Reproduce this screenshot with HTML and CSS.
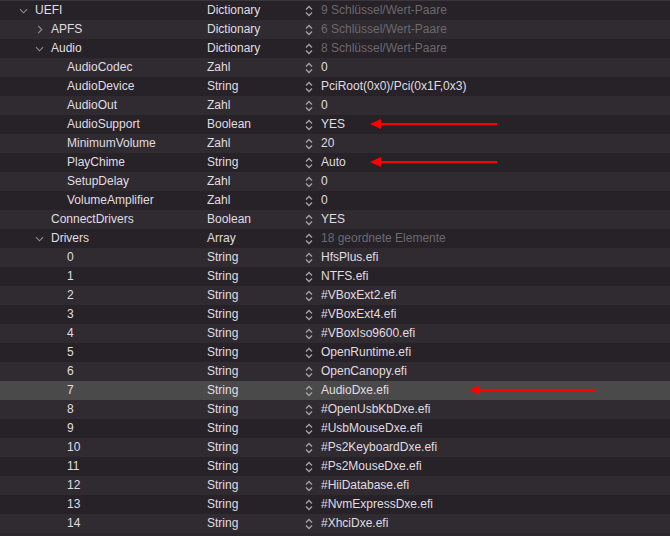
FILE: index.html
```html
<!DOCTYPE html>
<html lang="de">

<head>
    <meta charset="UTF-8">
    <title>config.plist</title>
    <link rel="stylesheet" href="styles.css">
</head>

<body>
    <div class="plist" id="plist"></div>

    <svg width="0" height="0" class="defs">
        <symbol id="chev-down" viewBox="0 0 10 6">
            <path d="M1 1 L5 5 L9 1" fill="none" stroke="currentColor" stroke-width="1.2" />
        </symbol>
        <symbol id="chev-right" viewBox="0 0 6 10">
            <path d="M1 1 L5 5 L1 9" fill="none" stroke="currentColor" stroke-width="1.2" />
        </symbol>
        <symbol id="stepper" viewBox="0 0 8 12">
            <path d="M1 4.5 L4 1.5 L7 4.5 M1 7.5 L4 10.5 L7 7.5" fill="none" stroke="currentColor" stroke-width="1.3" />
        </symbol>
    </svg>

    <script>
        // key, type, value, depth, toggle ('open' | 'closed' | ''), dim value, arrow offset
        const rows = [
            ['UEFI', 'Dictionary', '9 Schlüssel/Wert-Paare', 0, 'open', true],
            ['APFS', 'Dictionary', '6 Schlüssel/Wert-Paare', 1, 'closed', true],
            ['Audio', 'Dictionary', '8 Schlüssel/Wert-Paare', 1, 'open', true],
            ['AudioCodec', 'Zahl', '0', 2],
            ['AudioDevice', 'String', 'PciRoot(0x0)/Pci(0x1F,0x3)', 2],
            ['AudioOut', 'Zahl', '0', 2],
            ['AudioSupport', 'Boolean', 'YES', 2, '', false, 67],
            ['MinimumVolume', 'Zahl', '20', 2],
            ['PlayChime', 'String', 'Auto', 2, '', false, 67],
            ['SetupDelay', 'Zahl', '0', 2],
            ['VolumeAmplifier', 'Zahl', '0', 2],
            ['ConnectDrivers', 'Boolean', 'YES', 1],
            ['Drivers', 'Array', '18 geordnete Elemente', 1, 'open', true],
            ['0', 'String', 'HfsPlus.efi', 2],
            ['1', 'String', 'NTFS.efi', 2],
            ['2', 'String', '#VBoxExt2.efi', 2],
            ['3', 'String', '#VBoxExt4.efi', 2],
            ['4', 'String', '#VBoxIso9600.efi', 2],
            ['5', 'String', 'OpenRuntime.efi', 2],
            ['6', 'String', 'OpenCanopy.efi', 2],
            ['7', 'String', 'AudioDxe.efi', 2, '', false, 166],
            ['8', 'String', '#OpenUsbKbDxe.efi', 2],
            ['9', 'String', '#UsbMouseDxe.efi', 2],
            ['10', 'String', '#Ps2KeyboardDxe.efi', 2],
            ['11', 'String', '#Ps2MouseDxe.efi', 2],
            ['12', 'String', '#HiiDatabase.efi', 2],
            ['13', 'String', '#NvmExpressDxe.efi', 2],
            ['14', 'String', '#XhciDxe.efi', 2]
        ];

        const list = document.getElementById('plist');

        rows.forEach(([key, type, value, depth, toggle, dim, arrow], i) => {
            const row = document.createElement('div');
            row.className = 'row' + (i % 2 ? ' odd' : '') + (key === '7' && depth === 2 ? ' selected' : '');

            let chevron = '';
            if (toggle === 'open') chevron = '<svg class="chev down"><use href="#chev-down"/></svg>';
            if (toggle === 'closed') chevron = '<svg class="chev right"><use href="#chev-right"/></svg>';

            row.innerHTML = `
                <div class="key depth-${depth}"><span class="toggle">${chevron}</span>${key}</div>
                <div class="type">${type}</div>
                <div class="value">
                    <svg class="stepper"><use href="#stepper"/></svg>
                    <span class="${dim ? 'dim' : ''}">${value}</span>
                    ${arrow ? `<span class="arrow" style="left: ${arrow}px"></span>` : ''}
                </div>
            `;
            list.appendChild(row);
        });
    </script>
</body>

</html>
```

FILE: styles.css
```css
body {
    margin: 0;
    background-color: #2b272d;
    font-family: "Liberation Sans", Arial, sans-serif;
    font-size: 12px;
    color: #e0dde1;
}

.defs {
    position: absolute;
}

.plist {
    border-top: 1px solid #3a363c;
}

.row {
    display: grid;
    grid-template-columns: 207px 96px 1fr;
    height: 19px;
    line-height: 19px;
    background-color: #262228;
    white-space: nowrap;
}

.row.odd {
    background-color: #2f2b31;
}

.row.selected {
    background-color: #4a4a4a;
}

.key {
    display: flex;
    align-items: center;
}

.toggle {
    width: 17px;
    flex-shrink: 0;
    display: flex;
    align-items: center;
    color: #948f96;
}

.toggle .chev {
    display: block;
}

.depth-0 {
    padding-left: 18px;
}

.depth-1 {
    padding-left: 34px;
}

.depth-2 {
    padding-left: 50px;
}

.chev.down {
    width: 9px;
    height: 6px;
    margin-left: 1px;
}

.chev.right {
    width: 6px;
    height: 9px;
    margin-left: 3px;
}

.value {
    position: relative;
    display: flex;
    align-items: center;
}

.stepper {
    width: 8px;
    height: 12px;
    margin-left: 2px;
    margin-right: 8px;
    color: #a6a3a8;
}

.dim {
    color: #6c686e;
}

.arrow {
    position: absolute;
    top: 4px;
    width: 127px;
    height: 10px;
}

.arrow::before {
    content: "";
    position: absolute;
    left: 0;
    top: 0;
    border-top: 5px solid transparent;
    border-bottom: 5px solid transparent;
    border-right: 11px solid #f00;
}

.arrow::after {
    content: "";
    position: absolute;
    left: 10px;
    right: 0;
    top: 4px;
    height: 2px;
    background-color: #f00;
}
```
